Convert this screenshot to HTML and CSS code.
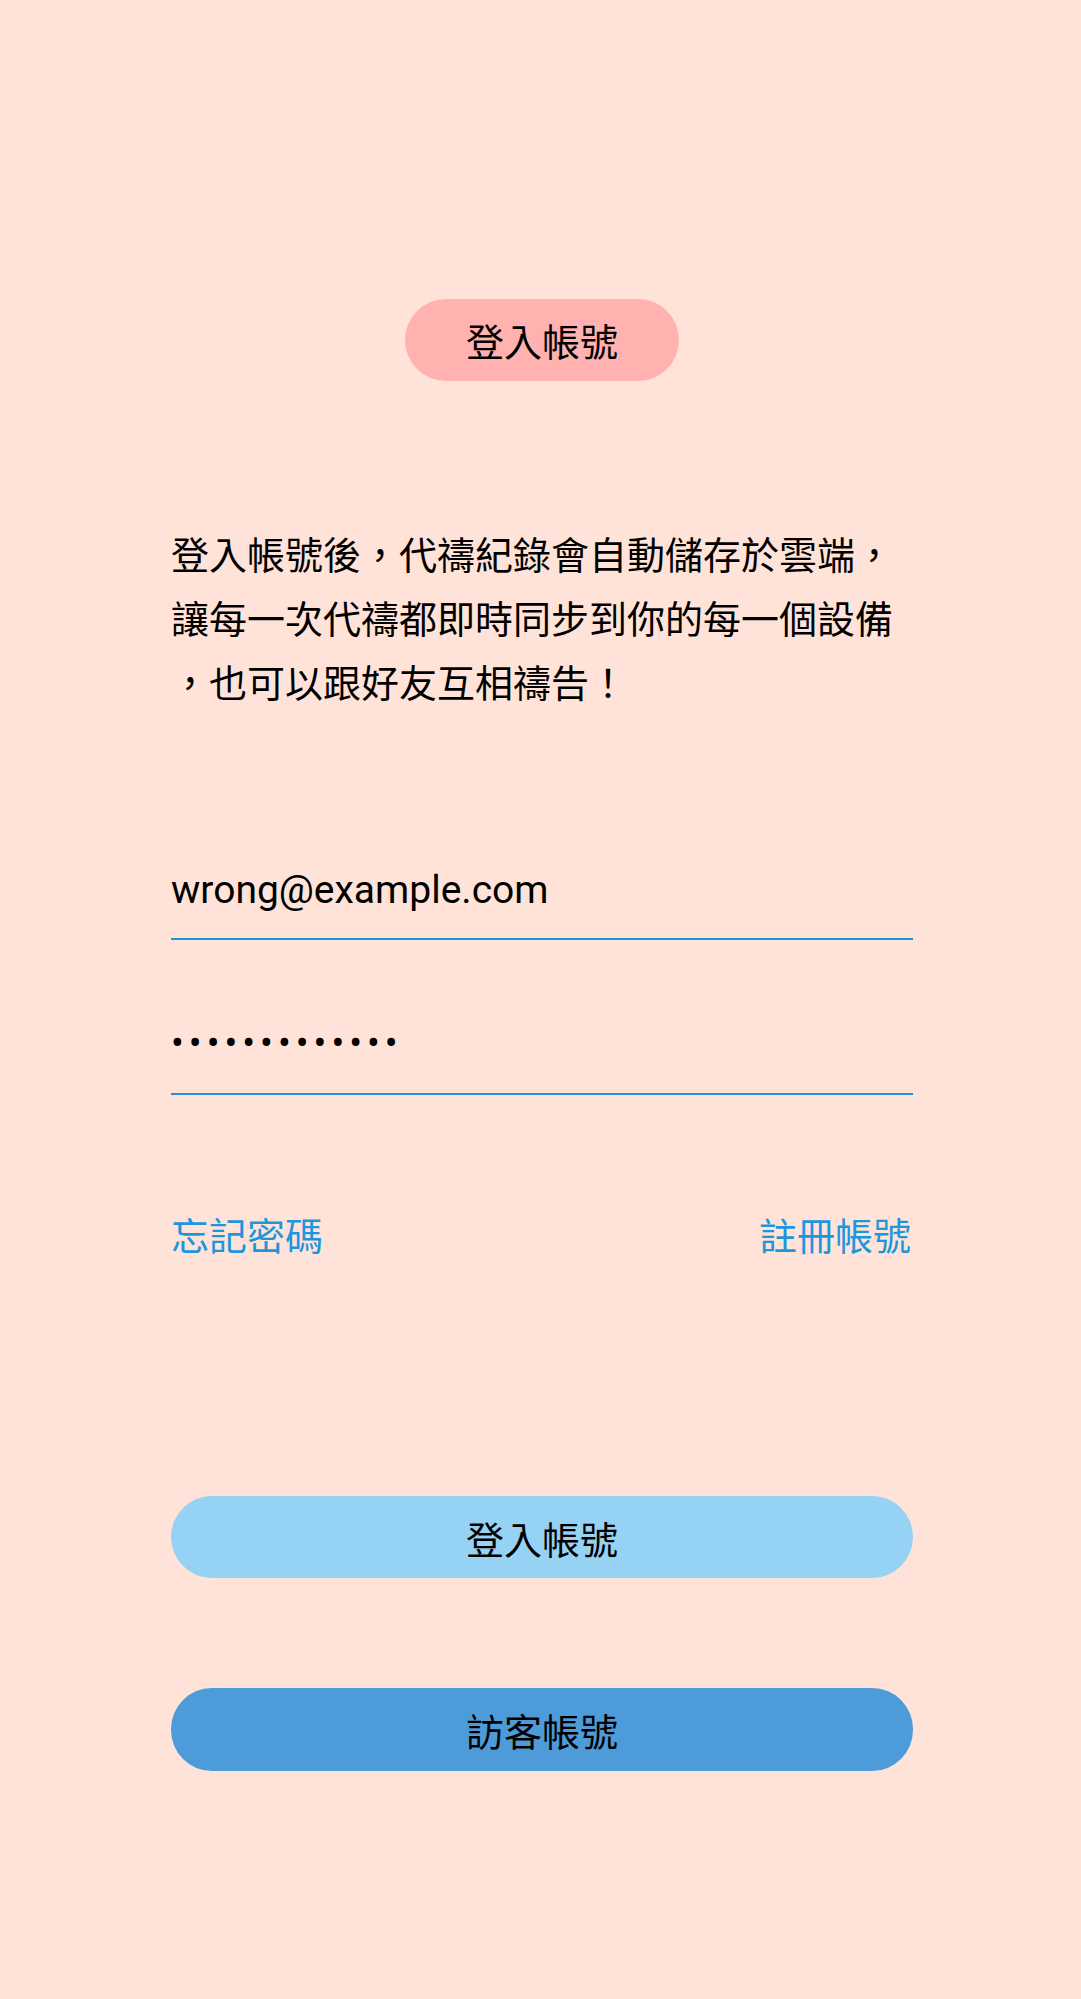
FILE: index.html
```html
<!DOCTYPE html>
<html lang="zh-Hant">
<head>
<meta charset="utf-8">
<title>登入帳號</title>
<link rel="stylesheet" href="styles.css">
</head>
<body>
<main class="page">
  <div class="title-wrap">
    <div class="title-pill">登入帳號</div>
  </div>
  <p class="intro">登入帳號後，代禱紀錄會自動儲存於雲端，<br>讓每一次代禱都即時同步到你的每一個設備<br>，也可以跟好友互相禱告！</p>
  <div class="field field-email">wrong@example.com</div>
  <div class="field field-password"><span class="dots">•••••••••••••</span></div>
  <div class="links">
    <a class="link">忘記密碼</a>
    <a class="link link-right">註冊帳號</a>
  </div>
  <button class="btn btn-login">登入帳號</button>
  <button class="btn btn-guest">訪客帳號</button>
</main>
</body>
</html>
```
FILE: styles.css
```css
html, body {
  margin: 0;
  padding: 0;
}
body {
  background: #ffe3d9;
  font-family: "Noto Sans CJK TC", "Noto Sans", sans-serif;
  color: #000;
  min-height: 1999px;
}
.page {
  width: 742px;
  margin-left: 171px;
  padding-top: 299px;
  display: flex;
  flex-direction: column;
}
.title-wrap {
  display: flex;
  justify-content: center;
}
.title-pill {
  width: 274px;
  height: 82px;
  border-radius: 41px;
  background: #ffb2b0;
  display: flex;
  align-items: center;
  justify-content: center;
  font-size: 38px;
  line-height: 1;
}
.intro {
  margin: 140px 0 0;
  font-size: 38px;
  line-height: 64px;
  white-space: nowrap;
}
.field {
  font-family: Roboto, "Noto Sans", sans-serif;
  font-size: 39px;
  line-height: 46px;
  border-bottom: 2px solid #1b95dc;
  padding-bottom: 25px;
}
.field-email {
  margin-top: 154px;
}
.field-password {
  margin-top: 80px;
  padding-bottom: 27px;
}
.dots {
  font-size: 38px;
  letter-spacing: 5px;
}
.links {
  margin-top: 114px;
  display: flex;
  justify-content: space-between;
  font-size: 38px;
  line-height: 50px;
}
.link {
  color: #1e96dc;
  text-decoration: none;
}
.link-right {
  margin-right: 2px;
}
.btn {
  display: flex;
  align-items: center;
  justify-content: center;
  width: 100%;
  height: 82px;
  border: none;
  border-radius: 41px;
  font-family: "Noto Sans CJK TC", "Noto Sans", sans-serif;
  font-size: 38px;
  color: #000;
  padding: 0;
}
.btn-login {
  margin-top: 237px;
  background: #96d2f4;
}
.btn-guest {
  margin-top: 110px;
  height: 83px;
  background: #4d9bd8;
}
```
